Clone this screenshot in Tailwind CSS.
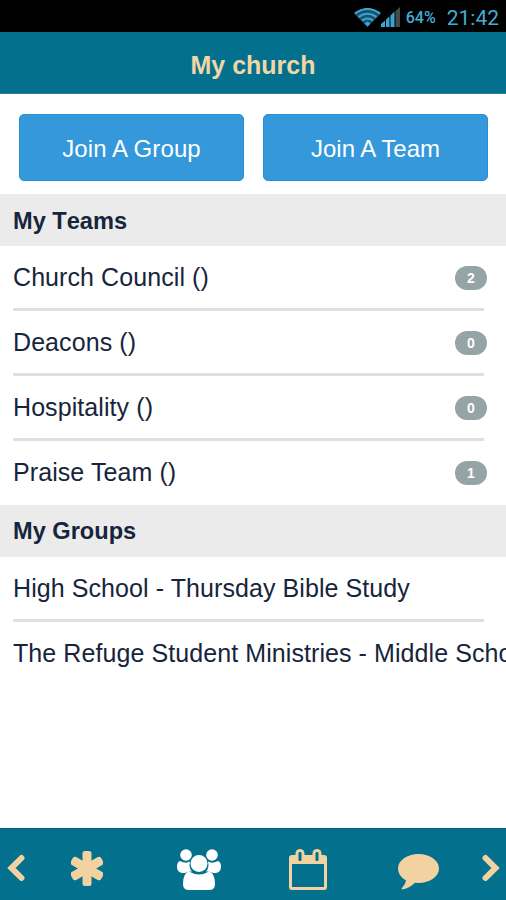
<!DOCTYPE html>
<html lang="en">
<head>
    <meta charset="UTF-8">
    <meta name="viewport" content="width=device-width, initial-scale=1.0">
    <title>My church</title>
    <script src="https://cdn.jsdelivr.net/npm/@tailwindcss/browser@4"></script>
</head>
<body class="bg-white">
<div class="h-[900px] w-full flex flex-col overflow-hidden font-['Liberation_Sans',Arial,sans-serif] text-[#17253c]">
    <!-- Status Bar -->
    <div class="h-8 shrink-0 bg-black flex items-center justify-end pr-[7px] text-[#43acd6] font-[Roboto,sans-serif]">
        <svg class="w-[27px] h-[19px] mt-0.5" viewBox="0 0 27 19" fill="none" stroke="#3ba5cf">
            <path d="M0 5.5Q13.500-5 27 5.500L13.500 19Z" fill="#17516b" stroke="none"/>
            <path d="M1 5.500Q13.500-3.500 26 5.500M4.500 9Q13.500 2.500 22.500 9M8 12.500Q13.500 8.500 19 12.500" stroke-width="2.200"/>
            <path d="M10.500 15.500L13.500 13.500L16.500 15.500L13.500 18.500Z" fill="#3ba5cf" stroke="none"/>
        </svg>
        <svg class="w-[19px] h-5 mr-1.5 mt-0.5" viewBox="0 0 19 20">
            <path d="M0 20V17L4 13.500V20Z M5 20V12.500L8.500 9.500V20Z M9.500 20V8.500L13.500 4.500V20Z" fill="#3ba5cf"/>
            <path d="M14.500 20V4L19 0V20Z" fill="#45494b"/>
        </svg>
        <span class="w-[31px] mr-[10px] pt-[3px] text-[16px] font-medium whitespace-nowrap">64%</span>
        <span class="text-[21px] leading-8 pt-[3px]">21:42</span>
    </div>

    <!-- Header -->
    <header class="h-[62px] shrink-0 bg-[#03718e] flex items-center justify-center border-b border-[#2b86a0]">
        <h1 class="text-[25px] leading-8 font-bold text-[#f2d6a6] pt-1">My church</h1>
    </header>

    <!-- Main Content -->
    <main class="flex-1 min-h-0">
        <div class="flex gap-[19px] pl-[19px] pr-[18px] pt-5 pb-[13px]">
            <button class="flex-1 h-[67px] rounded-[5px] bg-[#3498db] border border-[#2490d6] text-white text-[24px] pt-0.5 tracking-[0.1px]">Join A Group</button>
            <button class="flex-1 h-[67px] rounded-[5px] bg-[#3498db] border border-[#2490d6] text-white text-[24px] pt-0.5">Join A Team</button>
        </div>

        <h2 class="h-[52px] bg-[#ebebeb] pl-[13px] text-[23.6px] leading-[54px] font-bold [font-kerning:none]">My Teams</h2>
        <ul class="pl-[13px] text-[25px] tracking-[0.08px] whitespace-nowrap">
            <li class="h-[65px] mr-[22px] flex items-center justify-between border-b-3 border-[#dfdfdf]">
                <span class="pt-0.5">Church Council ()</span>
                <span class="w-8 h-6 mt-px -mr-[3px] rounded-full bg-[#95a5a6] text-white text-[14px] leading-[25px] font-bold text-center tracking-normal">2</span>
            </li>
            <li class="h-[65px] mr-[22px] flex items-center justify-between border-b-3 border-[#dfdfdf]">
                <span class="pt-0.5">Deacons ()</span>
                <span class="w-8 h-6 mt-px -mr-[3px] rounded-full bg-[#95a5a6] text-white text-[14px] leading-[25px] font-bold text-center tracking-normal">0</span>
            </li>
            <li class="h-[65px] mr-[22px] flex items-center justify-between border-b-3 border-[#dfdfdf]">
                <span class="pt-0.5">Hospitality ()</span>
                <span class="w-8 h-6 mt-px -mr-[3px] rounded-full bg-[#95a5a6] text-white text-[14px] leading-[25px] font-bold text-center tracking-normal">0</span>
            </li>
            <li class="h-16 mr-[22px] pb-0.5 flex items-center justify-between">
                <span class="pt-0.5">Praise Team ()</span>
                <span class="w-8 h-6 mt-px -mr-[3px] rounded-full bg-[#95a5a6] text-white text-[14px] leading-[25px] font-bold text-center tracking-normal">1</span>
            </li>
        </ul>

        <h2 class="h-[52px] bg-[#ebebeb] pl-[13px] text-[23.6px] leading-[53px] font-bold [font-kerning:none]">My Groups</h2>
        <ul class="pl-[13px] text-[25px] tracking-[0.08px] whitespace-nowrap">
            <li class="h-[65px] mr-[22px] pt-0.5 flex items-center border-b-3 border-[#dfdfdf]">High School - Thursday Bible Study</li>
            <li class="h-16 flex items-center">The Refuge Student Ministries - Middle School</li>
        </ul>
    </main>

    <!-- Bottom Nav -->
    <nav class="h-[72px] shrink-0 bg-[#03718e] border-t border-[#02607c] flex text-[#f2d2a0]">
        <button class="w-[31px] flex items-start pl-[7px] pt-[25px]">
            <svg class="w-[18px] h-7" viewBox="0 0 18 28" fill="none" stroke="currentColor" stroke-width="6" stroke-linecap="round">
                <path d="M14.500 4L4.500 14L14.500 24"/>
            </svg>
        </button>
        <button class="w-[111px] flex justify-center items-start pt-[22px]">
            <svg class="w-8 h-[35px]" viewBox="0 0 32 35" fill="currentColor">
                <rect x="11.500" y="0" width="9" height="35" rx="2.500"/>
                <rect x="11.500" y="0" width="9" height="35" rx="2.500" transform="rotate(60 16 17.500)"/>
                <rect x="11.500" y="0" width="9" height="35" rx="2.500" transform="rotate(-60 16 17.500)"/>
            </svg>
        </button>
        <button class="w-[113px] flex justify-center items-start pt-5">
            <svg class="w-11 h-[41px]" viewBox="0 0 44 41" fill="#fff">
                <circle cx="9" cy="6" r="5.800"/>
                <circle cx="35" cy="6" r="5.800"/>
                <path d="M3 12Q9 15 13 12.500Q11.500 19 15 22.500Q11 22 8 24H5Q0 23 0 18Q0 13 3 12Z"/>
                <path d="M41 12Q35 15 31 12.500Q32.500 19 29 22.500Q33 22 36 24H39Q44 23 44 18Q44 13 41 12Z"/>
                <circle cx="22" cy="14.500" r="8.500"/>
                <path d="M12 22.500Q22 28.500 32 22.500Q38 24 38 35Q38 41 32 41H12Q6 41 6 35Q6 24 12 22.500Z"/>
            </svg>
        </button>
        <button class="w-[106px] flex justify-center items-start pt-5">
            <svg class="w-[38px] h-[41px]" viewBox="0 0 38 41">
                <path d="M3 6H35Q38 6 38 9V38Q38 41 35 41H3Q0 41 0 38V9Q0 6 3 6ZM3 15V38H35V15Z" fill="currentColor" fill-rule="evenodd"/>
                <rect x="6.500" y="0" width="9" height="13.500" rx="4.500" fill="currentColor"/>
                <rect x="23.500" y="0" width="9" height="13.500" rx="4.500" fill="currentColor"/>
                <rect x="9.500" y="3" width="3" height="9" rx="1" fill="#03718e"/>
                <rect x="26.500" y="3" width="3" height="9" rx="1" fill="#03718e"/>
            </svg>
        </button>
        <button class="flex-1 flex justify-center items-start pt-[25px]">
            <svg class="w-[41px] h-9" viewBox="0 0 41 36" fill="currentColor">
                <path d="M20.500 0C32 0 41 6.500 41 14.500S32 29 20.500 29L17 28.800Q12 34 4.500 35.500Q3 35.500 4 34Q7.500 30.500 8 26.500Q0 22 0 14.500C0 6.500 9 0 20.500 0Z"/>
            </svg>
        </button>
        <button class="w-[31px] flex items-start pl-[7px] pt-[25px]">
            <svg class="w-[18px] h-7" viewBox="0 0 18 28" fill="none" stroke="currentColor" stroke-width="6" stroke-linecap="round">
                <path d="M3.500 4L13.500 14L3.500 24"/>
            </svg>
        </button>
    </nav>
</div>
</body>
</html>
